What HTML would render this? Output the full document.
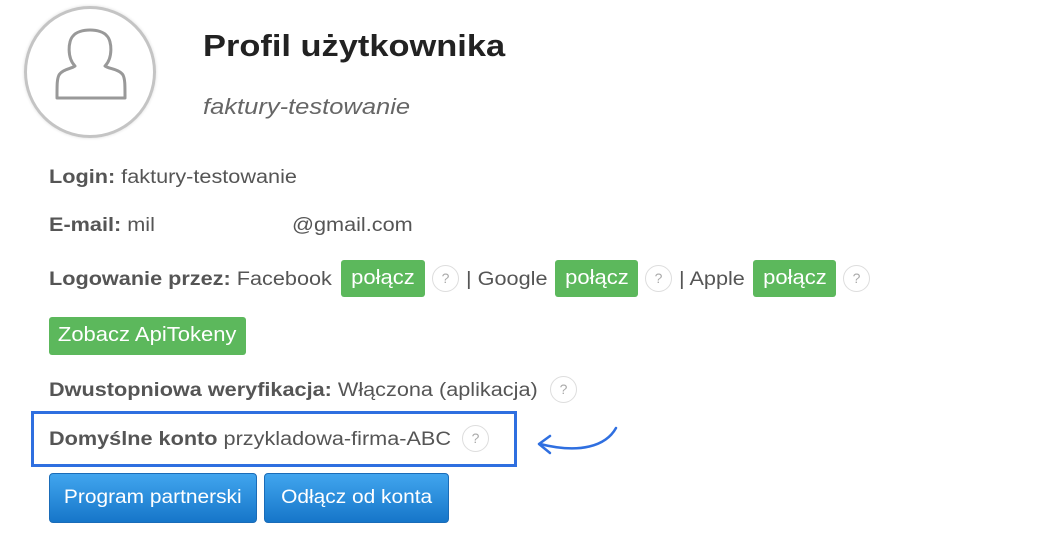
<!DOCTYPE html>
<html><head><meta charset="utf-8"><style>
body{margin:0;width:1039px;height:548px;background:#fff;position:relative;overflow:hidden;font-family:"Liberation Sans",sans-serif;color:#555;}
.a{position:absolute;white-space:nowrap;}
.row{font-size:19px;line-height:24px;transform:scaleX(1.14);transform-origin:0 0;}
.row b{color:#555;}
.g{position:absolute;background:#5cb85c;color:#fff;border-radius:3px;font-size:20px;text-align:center;}
.g span,.bb span{display:inline-block;transform:scaleX(1.1);}
.q{position:absolute;width:25px;height:25px;border:1px solid #ddd;border-radius:50%;color:#aaa;font-size:14px;text-align:center;line-height:25px;}
.bb{position:absolute;background:linear-gradient(#41a5ee,#1676c9);border:1px solid #1a6cb8;border-radius:4px;color:#fff;font-size:19px;text-align:center;line-height:48px;}
</style></head><body>
<div class="a" style="left:24px;top:6px;width:126px;height:126px;border:3px solid #c4c4c4;border-radius:50%;box-shadow:0 0 3px #ddd;"></div>
<svg class="a" style="left:24px;top:6px" width="132" height="132" viewBox="0 0 132 132">
<path d="M51 60 C43 52 44 35 49 30 C55 22 77 22 83 30 C88 35 89 52 81 60 C85 63 95 63 99 69 C101 73 101 78 101 92 L33 92 C33 78 33 73 35 69 C39 63 47 63 51 60 Z" fill="none" stroke="#999" stroke-width="3" stroke-linejoin="round"/>
</svg>
<div class="a" style="left:203px;top:28px;font-size:31px;font-weight:bold;color:#222;transform:scaleX(1.11);transform-origin:0 0;">Profil użytkownika</div>
<div class="a" style="left:203px;top:94px;font-size:22px;font-style:italic;color:#666;transform:scaleX(1.16);transform-origin:0 0;">faktury-testowanie</div>
<div class="a row" style="left:49px;top:166px;"><b>Login:</b> faktury-testowanie</div>
<div class="a row" style="left:49px;top:214px;"><b>E-mail:</b> mil</div>
<div class="a row" style="left:292px;top:214px;">@gmail.com</div>
<div class="a row" style="left:49px;top:268px;"><b>Logowanie przez:</b> Facebook</div>
<div class="g" style="left:341px;top:260px;width:84px;height:37px;line-height:36px;"><span>połącz</span></div>
<div class="q" style="left:432px;top:265px;">?</div>
<div class="a row" style="left:466px;top:268px;">| Google</div>
<div class="g" style="left:555px;top:260px;width:83px;height:37px;line-height:36px;"><span>połącz</span></div>
<div class="q" style="left:645px;top:265px;">?</div>
<div class="a row" style="left:679px;top:268px;">| Apple</div>
<div class="g" style="left:753px;top:260px;width:83px;height:37px;line-height:36px;"><span>połącz</span></div>
<div class="q" style="left:843px;top:265px;">?</div>
<div class="g" style="left:49px;top:317px;width:197px;height:38px;line-height:37px;"><span>Zobacz ApiTokeny</span></div>
<div class="a row" style="left:49px;top:379px;"><b>Dwustopniowa weryfikacja:</b> Włączona (aplikacja)</div>
<div class="q" style="left:550px;top:376px;">?</div>
<div class="a" style="left:31px;top:411px;width:480px;height:50px;border:3px solid #2f6fe0;"></div>
<div class="a row" style="left:49px;top:428px;"><b>Domyślne konto</b> przykladowa-firma-ABC</div>
<div class="q" style="left:462px;top:425px;">?</div>
<svg class="a" style="left:530px;top:422px" width="92" height="40" viewBox="0 0 92 40">
<path d="M86 6 C76 24 50 32 10 22" fill="none" stroke="#2f6fe0" stroke-width="2.5" stroke-linecap="round"/>
<path d="M20 14 L9 22 L20 31" fill="none" stroke="#2f6fe0" stroke-width="2.5" stroke-linecap="round" stroke-linejoin="round"/>
</svg>
<div class="bb" style="left:49px;top:473px;width:206px;height:48px;"><span>Program partnerski</span></div>
<div class="bb" style="left:264px;top:473px;width:183px;height:48px;"><span>Odłącz od konta</span></div>
</body></html>
